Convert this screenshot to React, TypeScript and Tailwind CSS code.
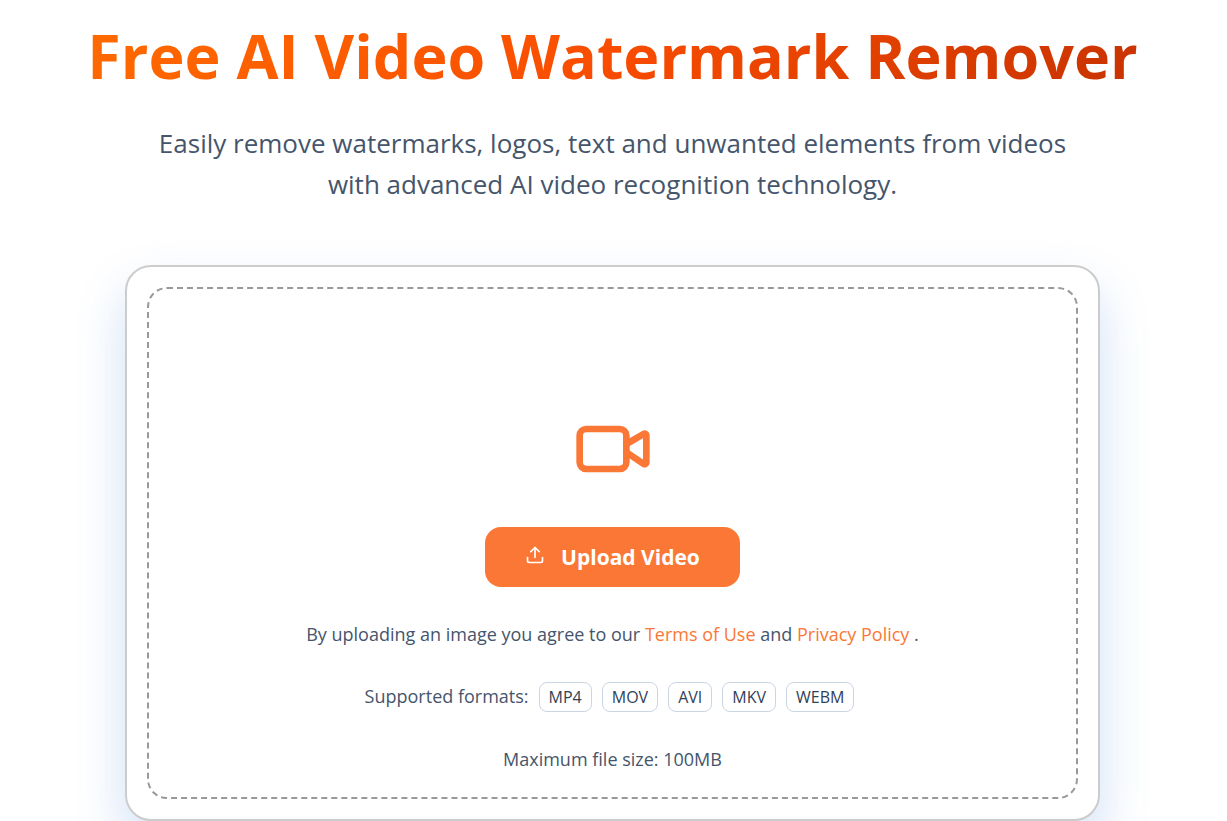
import { Upload, Video } from 'lucide-react'

const FORMATS = ['MP4', 'MOV', 'AVI', 'MKV', 'WEBM']

function FormatTag({ children }: { children: React.ReactNode }) {
  return (
    <li className="rounded-lg border border-slate-300 px-[9px] text-base leading-7 text-slate-700">{children}</li>
  )
}

function TextLink({ href, children }: { href: string; children: React.ReactNode }) {
  return (
    <a href={href} className="text-[#fb7735] hover:underline">{children}</a>
  )
}

function Hero() {
  return (
    <header className="text-center">
      <h1 className="inline-block bg-linear-135 from-[#ff6b00] via-[#f94c00] to-[#c73200] bg-clip-text text-[61px] leading-[82px] font-bold text-transparent">
        Free AI Video Watermark Remover
      </h1>
      <p className="mx-auto mt-[26px] max-w-[920px] text-[26px] leading-[41px] text-slate-600">
        Easily remove watermarks, logos, text and unwanted elements from videos with advanced AI video recognition technology.
      </p>
    </header>
  )
}

function UploadCard() {
  return (
    <section className="mx-auto mt-15 max-w-[975px] rounded-[26px] border-2 border-[#cccccc] bg-white p-5 shadow-[0_25px_50px_rgba(50,120,215,0.23)]">
      <div className="flex flex-col items-center rounded-[20px] border-2 border-dashed border-[#999999] px-5 pt-30 pb-6 text-[18px] leading-7 text-slate-600">
        <Video size={80} className="text-[#fb7735]" />
        <button
          type="button"
          className="mt-[38px] flex h-15 items-center gap-4 rounded-2xl bg-[#fb7735] px-10 text-[21px] font-bold text-white"
        >
          <Upload size={20} className="mb-1" />
          Upload Video
        </button>
        <p className="mt-[33px]">
          By uploading an image you agree to our <TextLink href="#terms">Terms of Use</TextLink> and{' '}
          <TextLink href="#privacy">Privacy Policy</TextLink> .
        </p>
        <div className="mt-[34px] flex flex-wrap items-start justify-center gap-[10px] pr-[6px]">
          <span>Supported formats:</span>
          <ul className="flex flex-wrap gap-[10px]">
            {FORMATS.map((format) => (
              <FormatTag key={format}>{format}</FormatTag>
            ))}
          </ul>
        </div>
        <p className="mt-[33px]">Maximum file size: 100MB</p>
      </div>
    </section>
  )
}

export default function App() {
  return (
    <main className="bg-white pt-[15px] pr-[22px] pl-5 font-['Open_Sans','Noto_Sans',sans-serif]">
      <Hero />
      <UploadCard />
    </main>
  )
}
